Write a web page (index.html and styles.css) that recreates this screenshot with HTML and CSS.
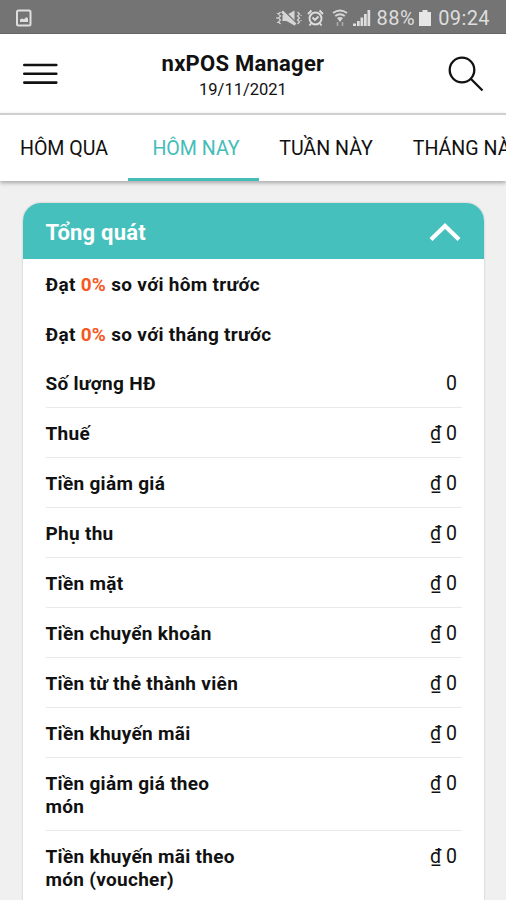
FILE: index.html
```html
<!DOCTYPE html>
<html lang="vi">
<head>
    <meta charset="UTF-8">
    <meta name="viewport" content="width=device-width, initial-scale=1.0">
    <title>nxPOS Manager</title>
    <link rel="stylesheet" href="styles.css">
</head>
<body>
    <div class="status-bar">
        <svg class="icon-image" width="16" height="18" viewBox="0 0 16 18" fill="none" stroke="#dedede">
            <rect x="1" y="1.5" width="13.5" height="15" rx="1.5" stroke-width="2"/>
            <path d="M4 13v-2.500l2-1 2 .7L10.500 8l1.500 1.500V13z" fill="#dedede" stroke="none"/>
        </svg>
        <div class="status-icons">
            <svg class="icon-mute" width="26" height="18" viewBox="0 0 26 18" fill="none" stroke="#d6d6d6" stroke-width="1.5">
                <path d="M4.5 3L2.5 5l2 2-2 2 2 2-2 2 2 2M1.5 4v1M1 8v2M1.5 13v1M21.5 3l2 2-2 2 2 2-2 2 2 2-2 2M25 6v1M25 11v1" stroke-width="1.2"/>
                <path d="M6.500 6h4l8-4.500v15L10.500 12h-4z" fill="#d6d6d6" stroke="none"/>
                <path d="M8.500 2.500l12 12" stroke="#747474" stroke-width="1.8"/>
                <path d="M6 2.500l13.500 13" stroke-width="2.600"/>
            </svg>
            <svg class="icon-alarm" width="17" height="18" viewBox="0 0 17 18" fill="none" stroke="#dedede" stroke-width="1.9">
                <circle cx="8.5" cy="9.5" r="6"/>
                <path d="M1 5l3.5-3.5M16 5l-3.5-3.5M5.5 8.5l2.5 2.5 3.5-3.5M4 14.5l-1.5 2M13 14.5l1.5 2"/>
            </svg>
            <svg class="icon-wifi" width="16" height="18" viewBox="0 0 16 18" fill="none" stroke="#d6d6d6" stroke-width="1.9">
                <path d="M1 4q7-5 14 0M3.2 7q4.800-3.500 9.600 0"/>
                <path d="M5 9q3-2 6 0l-3 4z" fill="#d6d6d6" stroke="none"/>
                <path d="M5.500 13v4M10.500 13v4" stroke="#a6a6a6" stroke-width="1.8"/>
            </svg>
            <svg class="icon-signal" width="18" height="18" viewBox="0 0 18 18" fill="#dedede">
                <path d="M0 14.500h3V17H0zM4 12h2.700v5H4zM7.500 8.500h2.700V17H7.500zM11 5h2.700v12H11zM14.500 1h2.700v16h-2.700z"/>
            </svg>
            <span class="battery-level">88%</span>
            <svg class="icon-battery" width="12" height="18" viewBox="0 0 12 18" fill="#e6e6e6">
                <path d="M3.500 1h5v2H12v14H0V3h3.500z"/>
            </svg>
            <span class="clock">09:24</span>
        </div>
    </div>

    <header class="app-header">
        <svg class="icon-menu" width="37" height="22" viewBox="0 0 37 22" stroke="#111" stroke-width="2.600" stroke-linecap="round">
            <path d="M2.300 2h32M2.300 10.800h32M2.300 19.600h32"/>
        </svg>
        <div class="app-title">
            <h1>nxPOS Manager</h1>
            <p>19/11/2021</p>
        </div>
        <svg class="icon-search" width="36" height="36" viewBox="0 0 36 36" fill="none" stroke="#111" stroke-width="2.300">
            <circle cx="14" cy="14" r="12.300"/>
            <path d="M23 23l11.500 11.500"/>
        </svg>
    </header>

    <nav class="tabs">
        <a class="tab tab-yesterday">HÔM QUA</a>
        <a class="tab tab-today active">HÔM NAY</a>
        <a class="tab tab-week">TUẦN NÀY</a>
        <a class="tab tab-month">THÁNG NÀY</a>
    </nav>

    <main class="content">
        <section class="card">
            <div class="card-header">
                <h2>Tổng quát</h2>
                <svg class="icon-chevron" width="32" height="20" viewBox="0 0 32 20" fill="none" stroke="#fff" stroke-width="4.200">
                    <path d="M2 16.500L16 3 30 16.500"/>
                </svg>
            </div>
            <div class="card-body">
                <p class="compare">Đạt <span class="percent">0%</span> so với hôm trước</p>
                <p class="compare">Đạt <span class="percent">0%</span> so với tháng trước</p>
                <div class="row"><span class="label">Số lượng HĐ</span><span class="value">0</span></div>
                <div class="row"><span class="label">Thuế</span><span class="value">₫ 0</span></div>
                <div class="row"><span class="label">Tiền giảm giá</span><span class="value">₫ 0</span></div>
                <div class="row"><span class="label">Phụ thu</span><span class="value">₫ 0</span></div>
                <div class="row"><span class="label">Tiền mặt</span><span class="value">₫ 0</span></div>
                <div class="row"><span class="label">Tiền chuyển khoản</span><span class="value">₫ 0</span></div>
                <div class="row"><span class="label">Tiền từ thẻ thành viên</span><span class="value">₫ 0</span></div>
                <div class="row"><span class="label">Tiền khuyến mãi</span><span class="value">₫ 0</span></div>
                <div class="row"><span class="label">Tiền giảm giá theo món</span><span class="value">₫ 0</span></div>
                <div class="row"><span class="label">Tiền khuyến mãi theo món (voucher)</span><span class="value">₫ 0</span></div>
            </div>
        </section>
    </main>
</body>
</html>
```

FILE: styles.css
```css
* { box-sizing: border-box; }
body { font-family: Roboto, 'Noto Sans', sans-serif; color: #111; background: #f0f0f0; margin: 0; height: 900px; overflow: hidden; }
h1, h2, p { margin: 0; }
svg { display: block; flex-shrink: 0; }

.status-bar { display: flex; justify-content: space-between; align-items: center; height: 34px; padding: 2px 16px 0 16px; background: #747474; border-bottom: 1px solid #666; color: #dedede; font-size: 20px; }
.status-icons { display: flex; align-items: center; }
.icon-alarm { margin-left: 5px; }
.icon-wifi { margin-left: 8px; }
.icon-signal { margin-left: 5px; }
.battery-level { margin-left: 6px; letter-spacing: 0.5px; }
.icon-battery { margin-left: 4px; }
.clock { margin-left: 7px; letter-spacing: 0.4px; }

.app-header { display: flex; justify-content: space-between; align-items: center; height: 79px; padding: 0 22px; background: #fff; }
.app-title { text-align: center; padding: 5px 21px 0 0; }
.app-title h1 { font-size: 22px; font-weight: 700; line-height: 28px; letter-spacing: 0.25px; }
.app-title p { font-size: 16.5px; line-height: 24px; }

.tabs { display: flex; height: 68px; border-top: 2px solid #cfcfcf; background: #fff; box-shadow: 0 2px 4px rgba(0,0,0,0.3); position: relative; overflow: hidden; }
.tab { flex-shrink: 0; padding-top: 22px; font-size: 19.6px; line-height: 24px; text-align: center; white-space: nowrap; }
.tab-yesterday { width: 128px; }
.tab-today { width: 131px; padding-left: 5px; }
.tab-week { width: 134px; }
.tab-month { width: 148px; }
.tab.active { color: #45bdb7; border-bottom: 3px solid #45bdb7; }

.content { padding: 22px 22px 0 23px; }
.card { background: #fff; border-radius: 18px 18px 0 0; box-shadow: 0 0 2px rgba(0,0,0,0.25); height: 697px; overflow: hidden; }
.card-header { display: flex; justify-content: space-between; align-items: center; height: 56px; padding: 3px 23px 0 22.5px; background: #46c0bd; color: #fff; }
.card-header h2 { font-size: 22px; font-weight: 700; line-height: 28px; letter-spacing: 0.2px; }
.card-body { padding: 0 22px 0 22.5px; font-size: 19px; line-height: 23px; letter-spacing: 0.3px; }
.compare { height: 49.5px; padding-top: 14px; font-weight: 700; }
.percent { color: #f4591f; }
.row { display: flex; justify-content: space-between; align-items: flex-start; padding: 14px 0 12px; border-bottom: 1px solid #e9e9e9; }
.row:last-child { border-bottom: none; padding-bottom: 0; }
.label { width: 200px; font-weight: 700; }
.value { padding-right: 5px; font-size: 19.5px; letter-spacing: 0; }
```
